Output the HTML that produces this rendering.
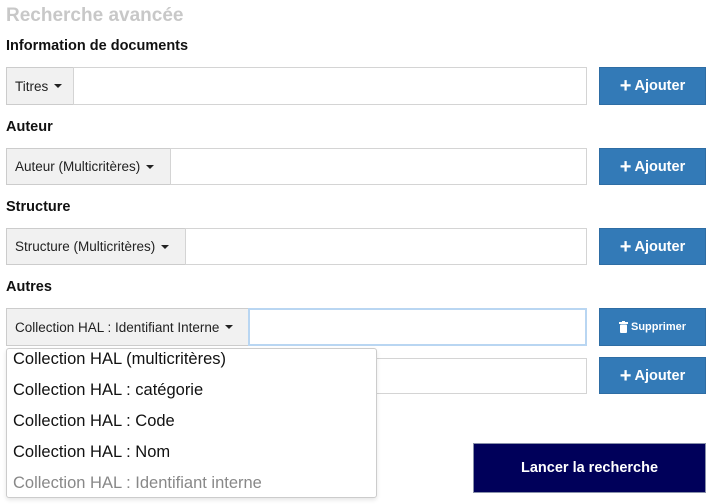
<!DOCTYPE html>
<html><head><meta charset="utf-8"><style>
body{margin:0;width:717px;height:504px;background:#fff;font-family:"Liberation Sans",sans-serif;position:relative;overflow:hidden;color:#222}
.a{position:absolute}
h1{position:absolute;left:6px;top:5px;margin:0;font-size:19px;font-weight:bold;color:#c8c8c8}
.h{position:absolute;left:6px;font-size:14.5px;font-weight:bold;color:#111}
.sel{position:absolute;left:6px;background:#f1f1f1;border:1px solid #ccc;box-sizing:border-box;font-size:13.5px;color:#222;padding-left:8px;display:flex;align-items:center;white-space:nowrap}
.sel::after{content:"";border-left:4px solid transparent;border-right:4px solid transparent;border-top:4px solid #222;margin-left:6px}
.in{position:absolute;border:1px solid #d4d4d4;box-sizing:border-box;background:#fff}
.btn{position:absolute;left:599px;width:107px;background:#337ab7;border:1px solid #2e6da4;box-sizing:border-box;color:#fff;font-weight:bold;font-size:14.5px;display:flex;align-items:center;justify-content:center}
.plus{font-size:20px;margin-right:3px;line-height:1}
.dd{position:absolute;left:6px;top:348px;width:371px;height:150px;border:1px solid #ccc;border-radius:3px;box-sizing:border-box;background:#fff;box-shadow:0 2px 4px rgba(0,0,0,.1)}
.dd div{position:absolute;left:6px;font-size:16.5px;color:#111}
</style></head><body>
<h1>Recherche avancée</h1>
<div class="h" style="top:38px">Information de documents</div>
<div class="sel" style="top:67px;width:68px;height:38px">Titres</div>
<div class="in" style="left:73px;top:67px;width:514px;height:38px"></div>
<div class="btn" style="top:67px;height:38px"><span class="plus">+</span>Ajouter</div>

<div class="h" style="top:119px">Auteur</div>
<div class="sel" style="top:148px;width:165px;height:37px">Auteur (Multicritères)</div>
<div class="in" style="left:170px;top:148px;width:417px;height:37px"></div>
<div class="btn" style="top:148px;height:37px"><span class="plus">+</span>Ajouter</div>

<div class="h" style="top:199px">Structure</div>
<div class="sel" style="top:228px;width:180px;height:37px">Structure (Multicritères)</div>
<div class="in" style="left:185px;top:228px;width:402px;height:37px"></div>
<div class="btn" style="top:228px;height:37px"><span class="plus">+</span>Ajouter</div>

<div class="h" style="top:279px">Autres</div>
<div class="sel" style="top:308px;width:243px;height:38px">Collection HAL : Identifiant Interne</div>
<div class="in" style="left:248px;top:308px;width:339px;height:38px;border:2px solid #b9d6f2"></div>
<div class="btn" style="top:308px;height:38px;font-size:11px"><svg width="9" height="12" viewBox="0 0 9 12" style="margin-right:3px"><rect x="0" y="1" width="9" height="2" fill="#fff"/><rect x="3" y="0" width="3" height="2" fill="#fff"/><rect x="1" y="3.5" width="7" height="8.5" rx="1" fill="#fff"/></svg>Supprimer</div>

<div class="in" style="left:6px;top:358px;width:581px;height:36px"></div>
<div class="btn" style="top:357px;height:37px"><span class="plus">+</span>Ajouter</div>

<div class="a" style="left:473px;top:443px;width:233px;height:50px;background:#00005a;border:1px solid #8890aa;box-sizing:border-box;color:#fff;font-weight:bold;font-size:14.5px;display:flex;align-items:center;justify-content:center">Lancer la recherche</div>

<div class="dd">
<div style="top:1px">Collection HAL (multicritères)</div>
<div style="top:32px">Collection HAL : catégorie</div>
<div style="top:63px">Collection HAL : Code</div>
<div style="top:94px">Collection HAL : Nom</div>
<div style="top:125px;color:#888">Collection HAL : Identifiant interne</div>
</div>
</body></html>
